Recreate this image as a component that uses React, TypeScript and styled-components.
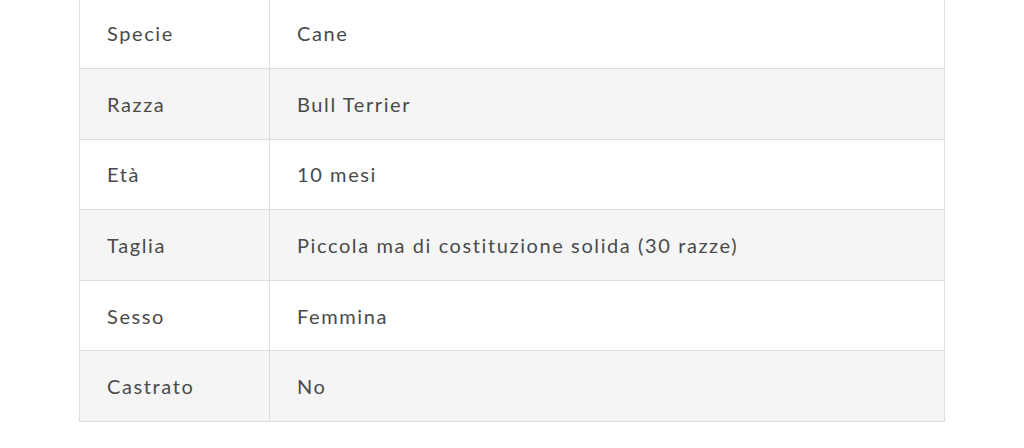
import styled, { createGlobalStyle } from "styled-components";

const GlobalStyle = createGlobalStyle`
  html, body {
    margin: 0;
    padding: 0;
    background: #ffffff;
  }
  body {
    font-family: Lato, "Open Sans", sans-serif;
    color: #4a4a4a;
  }
`;

const Page = styled.div`
  padding: 0 79px;
  margin-top: -2.5px;
`;

const Table = styled.table`
  width: 100%;
  border-collapse: collapse;
  border: 1px solid #dddddd;
`;

const Row = styled.tr<{ $striped: boolean }>`
  background: ${(p) => (p.$striped ? "#f5f5f5" : "#ffffff")};
`;

const Cell = styled.td<{ $label?: boolean }>`
  height: 70.6px;
  box-sizing: border-box;
  padding: 0 27px;
  border: 1px solid #dddddd;
  font-size: 20px;
  letter-spacing: 1.6px;
  line-height: 1;
  color: #4a4a4a;
  vertical-align: middle;
  width: ${(p) => (p.$label ? "190px" : "auto")};
`;

const rows: [string, string][] = [
  ["Specie", "Cane"],
  ["Razza", "Bull Terrier"],
  ["Età", "10 mesi"],
  ["Taglia", "Piccola ma di costituzione solida (30 razze)"],
  ["Sesso", "Femmina"],
  ["Castrato", "No"],
];

export default function App() {
  return (
    <>
      <GlobalStyle />
      <Page>
        <Table>
          <tbody>
            {rows.map(([label, value], i) => (
              <Row key={label} $striped={i % 2 === 1}>
                <Cell $label>{label}</Cell>
                <Cell>{value}</Cell>
              </Row>
            ))}
          </tbody>
        </Table>
      </Page>
    </>
  );
}
